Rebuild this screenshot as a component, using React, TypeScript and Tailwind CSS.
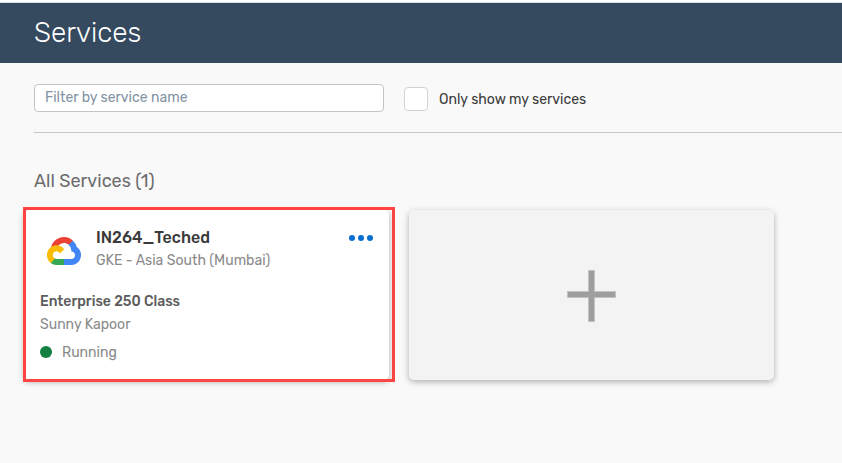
function CloudLogo() {
  return (
    <svg className="h-7 w-[34px] shrink-0" viewBox="0 0 256 206" preserveAspectRatio="none" aria-hidden="true">
      <path fill="#EA4335" d="M170.252 56.819l22.253-22.253 1.483-9.37C153.437-11.677 88.976-7.496 52.42 33.92 42.267 45.423 34.734 59.764 30.717 74.573l7.97-1.123 44.505-7.34 3.436-3.513c19.797-21.742 53.27-24.667 76.128-6.168l7.496.39z" />
      <path fill="#4285F4" d="M224.205 73.918a100.25 100.25 0 0 0-30.217-48.722l-31.232 31.232a55.515 55.515 0 0 1 20.379 44.037v5.544c15.35 0 27.797 12.445 27.797 27.796 0 15.352-12.446 27.485-27.797 27.485h-55.671l-5.466 5.934v33.34l5.466 5.231h55.67c39.93.311 72.553-31.494 72.864-71.424a72.303 72.303 0 0 0-31.793-60.453" />
      <path fill="#34A853" d="M71.87 205.796h55.593V161.29H71.87a27.275 27.275 0 0 1-11.4-2.498l-7.887 2.42-22.409 22.253-1.952 7.574c12.567 9.489 27.9 14.825 43.647 14.757" />
      <path fill="#FBBC05" d="M71.87 61.425C31.94 61.664-.237 94.228.001 134.158a72.301 72.301 0 0 0 28.222 56.88l32.248-32.246c-13.99-6.322-20.208-22.786-13.887-36.776 6.32-13.99 22.786-20.208 36.775-13.888a27.796 27.796 0 0 1 13.887 13.888l32.248-32.248A72.224 72.224 0 0 0 71.87 61.425" />
    </svg>
  );
}

function ServiceCard() {
  return (
    <article className="relative h-[170px] w-[365px] rounded-[5px] bg-white pt-[17px] pl-4 shadow-[0_2px_6px_rgba(0,0,0,0.3)]">
      <div className="flex">
        <div className="ml-[7px] pt-2.5"><CloudLogo /></div>
        <div className="ml-[15px] flex-1 whitespace-nowrap">
          <h3 className="h-[22px] text-[16px] leading-[22px] font-medium text-[#3a3a3a]">IN264_Teched</h3>
          <p className="mt-px h-[22px] text-[14px] leading-[22px] text-[#8a8a8a]">GKE - Asia South (Mumbai)</p>
        </div>
        <button aria-label="Service options" className="mt-2 mr-4 flex h-1.5 gap-[3px]">
          <span className="size-1.5 rounded-full bg-[#0a6ed1]" />
          <span className="size-1.5 rounded-full bg-[#0a6ed1]" />
          <span className="size-1.5 rounded-full bg-[#0a6ed1]" />
        </button>
      </div>
      <p className="mt-[19px] text-[14px] leading-[22px] font-medium text-[#5c5c5c]">Enterprise 250 Class</p>
      <p className="mt-px text-[14px] leading-[22px] text-[#8a8a8a]">Sunny Kapoor</p>
      <p className="mt-1.5 flex items-center text-[14px] leading-[22px] text-[#8a8a8a]">
        <span className="mr-2.5 mb-0.5 size-3 rounded-full bg-[#128040]" />
        <span>Running</span>
      </p>
      <div className="pointer-events-none absolute -top-[3px] -left-px h-[175px] w-[372px] border-[3px] border-[#ff4444]" />
    </article>
  );
}

export default function App() {
  return (
    <div className="h-[463px] w-[842px] overflow-hidden bg-[#f9f9f9] font-[Rubik,Roboto,sans-serif]">
      <header className="h-[63px] border-t-2 border-white bg-[#354a5f] bg-clip-padding">
        <div className="h-full border-t border-[#dcdfe3] pl-[34px]">
          <h1 className="text-[28px] leading-[60px] font-light text-white">Services</h1>
        </div>
      </header>
      <main>
        <div className="ml-[34px] flex h-[70px] border-b border-[#c6c6c6] pt-[21px]">
          <input aria-label="Filter by service name" placeholder="Filter by service name" className="h-7 w-[350px] rounded-[4px] border border-[#c4c4c4] bg-white px-2.5 pb-px text-[14px] outline-none placeholder:text-[#8393a2]" />
          <label className="ml-5 flex h-[30px] items-center text-[14px] text-[#3a3a3a]">
            <input type="checkbox" className="mr-[11px] size-6 appearance-none rounded-[4px] border border-[#d3d3d3] bg-white" />
            <span>Only show my services</span>
          </label>
        </div>
        <h2 className="mt-9 ml-[34px] h-6 text-[18px] leading-6 text-[#6c6c6c]">All Services (1)</h2>
        <section className="mt-[17px] ml-6 flex gap-5">
          <ServiceCard />
          <button aria-label="Create service" className="flex h-[170px] w-[365px] items-center justify-center rounded-[5px] bg-[#f3f3f3] shadow-[0_2px_6px_rgba(0,0,0,0.3)]">
            <svg className="mt-px h-[52px] w-[49px]" viewBox="0 0 49 52" aria-hidden="true">
              <path d="M21 0h7v21h21v7H28v24h-7V28H0v-7h21z" fill="#c2c2c2" />
              <path d="M22 1h5v21h21v5H27v24h-5V27H1v-5h21z" fill="#9e9e9e" />
            </svg>
          </button>
        </section>
      </main>
    </div>
  );
}
